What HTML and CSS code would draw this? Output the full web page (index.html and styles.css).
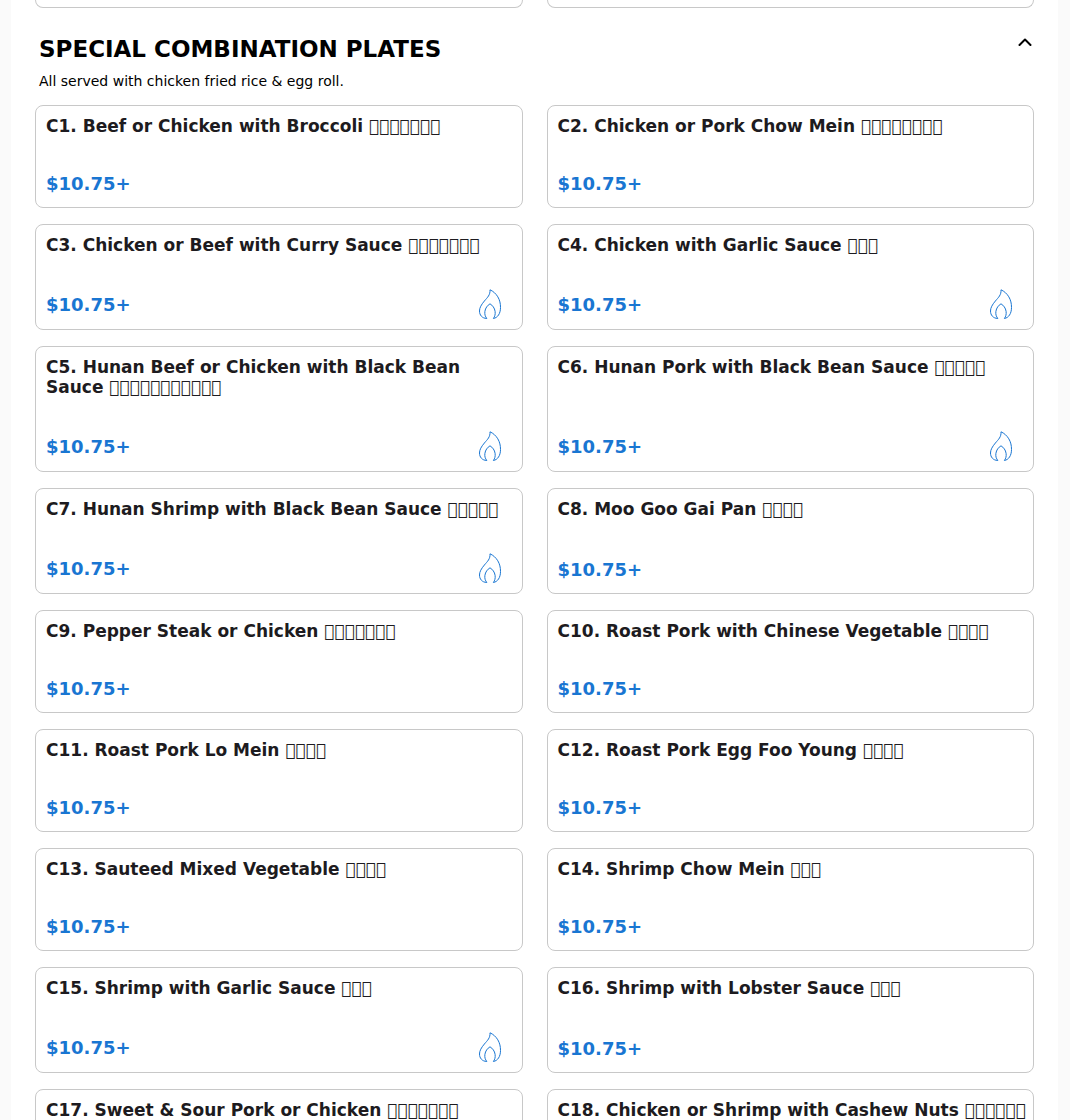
FILE: index.html
```
<!DOCTYPE html>
<html lang="en">
<head>
    <meta charset="UTF-8">
    <meta name="viewport" content="width=device-width, initial-scale=1.0">
    <title>Menu - Special Combination Plates</title>
    <link rel="stylesheet" href="styles.css">
</head>
<body>
    <!-- Shared flame icon for spicy dishes -->
    <svg class="sprite" aria-hidden="true">
        <symbol id="flame" viewBox="0 0 24 30">
            <path d="M12 0.8C12.4 6 9.4 8.4 6.4 12C3.2 15.8 1.5 18.8 1.5 22C1.5 26 4 29.3 8.8 29.5C7.2 27.4 6.5 25.4 6.9 22.4C7.4 19 9.4 16.4 12 14.8C14.6 16.4 16.6 19 17.1 22.4C17.5 25.4 16.8 27.4 15.4 29.5C19.6 28.8 22.5 24.6 22.5 18.6C22.5 14.4 21.8 11.2 19.8 7.8C18 4.8 15.2 2.2 12 0.8Z"/>
        </symbol>
    </svg>

    <main class="menu">
        <div class="menu-grid previous">
            <div class="card-end"></div>
            <div class="card-end"></div>
        </div>

        <section class="category">
            <header class="category-header">
                <div>
                    <h2>SPECIAL COMBINATION PLATES</h2>
                    <p>All served with chicken fried rice &amp; egg roll.</p>
                </div>
                <button class="btn-toggle" type="button" aria-label="Collapse category">
                    <svg viewBox="0 0 14 8"><path d="M1.5 7L7 1.5L12.5 7"/></svg>
                </button>
            </header>

            <div class="menu-grid">
                <article class="card">
                    <h3>C1. Beef or Chicken with Broccoli &#xE900;&#xE900;&#xE900;&#xE900;&#xE900;&#xE900;&#xE900;</h3>
                    <div class="card-footer"><span class="price">$10.75+</span></div>
                </article>
                <article class="card">
                    <h3>C2. Chicken or Pork Chow Mein &#xE900;&#xE900;&#xE900;&#xE900;&#xE900;&#xE900;&#xE900;&#xE900;</h3>
                    <div class="card-footer"><span class="price">$10.75+</span></div>
                </article>
                <article class="card">
                    <h3>C3. Chicken or Beef with Curry Sauce &#xE900;&#xE900;&#xE900;&#xE900;&#xE900;&#xE900;&#xE900;</h3>
                    <div class="card-footer"><span class="price">$10.75+</span><svg class="spicy"><use href="#flame"/></svg></div>
                </article>
                <article class="card">
                    <h3>C4. Chicken with Garlic Sauce &#xE900;&#xE900;&#xE900;</h3>
                    <div class="card-footer"><span class="price">$10.75+</span><svg class="spicy"><use href="#flame"/></svg></div>
                </article>
                <article class="card">
                    <h3>C5. Hunan Beef or Chicken with Black Bean Sauce &#xE900;&#xE900;&#xE900;&#xE900;&#xE900;&#xE900;&#xE900;&#xE900;&#xE900;&#xE900;&#xE900;</h3>
                    <div class="card-footer"><span class="price">$10.75+</span><svg class="spicy"><use href="#flame"/></svg></div>
                </article>
                <article class="card">
                    <h3>C6. Hunan Pork with Black Bean Sauce &#xE900;&#xE900;&#xE900;&#xE900;&#xE900;</h3>
                    <div class="card-footer"><span class="price">$10.75+</span><svg class="spicy"><use href="#flame"/></svg></div>
                </article>
                <article class="card">
                    <h3>C7. Hunan Shrimp with Black Bean Sauce &#xE900;&#xE900;&#xE900;&#xE900;&#xE900;</h3>
                    <div class="card-footer"><span class="price">$10.75+</span><svg class="spicy"><use href="#flame"/></svg></div>
                </article>
                <article class="card">
                    <h3>C8. Moo Goo Gai Pan &#xE900;&#xE900;&#xE900;&#xE900;</h3>
                    <div class="card-footer"><span class="price">$10.75+</span></div>
                </article>
                <article class="card">
                    <h3>C9. Pepper Steak or Chicken &#xE900;&#xE900;&#xE900;&#xE900;&#xE900;&#xE900;&#xE900;</h3>
                    <div class="card-footer"><span class="price">$10.75+</span></div>
                </article>
                <article class="card">
                    <h3>C10. Roast Pork with Chinese Vegetable &#xE900;&#xE900;&#xE900;&#xE900;</h3>
                    <div class="card-footer"><span class="price">$10.75+</span></div>
                </article>
                <article class="card">
                    <h3>C11. Roast Pork Lo Mein &#xE900;&#xE900;&#xE900;&#xE900;</h3>
                    <div class="card-footer"><span class="price">$10.75+</span></div>
                </article>
                <article class="card">
                    <h3>C12. Roast Pork Egg Foo Young &#xE900;&#xE900;&#xE900;&#xE900;</h3>
                    <div class="card-footer"><span class="price">$10.75+</span></div>
                </article>
                <article class="card">
                    <h3>C13. Sauteed Mixed Vegetable &#xE900;&#xE900;&#xE900;&#xE900;</h3>
                    <div class="card-footer"><span class="price">$10.75+</span></div>
                </article>
                <article class="card">
                    <h3>C14. Shrimp Chow Mein &#xE900;&#xE900;&#xE900;</h3>
                    <div class="card-footer"><span class="price">$10.75+</span></div>
                </article>
                <article class="card">
                    <h3>C15. Shrimp with Garlic Sauce &#xE900;&#xE900;&#xE900;</h3>
                    <div class="card-footer"><span class="price">$10.75+</span><svg class="spicy"><use href="#flame"/></svg></div>
                </article>
                <article class="card">
                    <h3>C16. Shrimp with Lobster Sauce &#xE900;&#xE900;&#xE900;</h3>
                    <div class="card-footer"><span class="price">$10.75+</span></div>
                </article>
                <article class="card">
                    <h3>C17. Sweet &amp; Sour Pork or Chicken &#xE900;&#xE900;&#xE900;&#xE900;&#xE900;&#xE900;&#xE900;</h3>
                </article>
                <article class="card">
                    <h3>C18. Chicken or Shrimp with Cashew Nuts &#xE900;&#xE900;&#xE900;&#xE900;&#xE900;&#xE900;</h3>
                </article>
            </div>
        </section>
    </main>
</body>
</html>
```
FILE: styles.css
```
* {
    box-sizing: border-box;
}

body {
    margin: 0;
    padding: 0 12px 0 11px;
    background-color: #fafafa;
    font-family: "DejaVu Sans", sans-serif;
    color: #000;
}

.sprite {
    display: none;
}

.menu {
    height: 100vh;
    padding: 0 24px;
    background-color: #fff;
    overflow: hidden;
}

.menu-grid {
    display: grid;
    grid-template-columns: 1fr 1fr;
    gap: 16px 24px;
}

/* Bottom edge of the category above */
.card-end {
    height: 8px;
    border: 1px solid #c8c8c8;
    border-top: none;
    border-radius: 0 0 8px 8px;
}

.category-header {
    display: flex;
    justify-content: space-between;
    align-items: flex-start;
    padding: 26px 2px 14px 4px;
}

.category-header h2 {
    margin: 0;
    font-size: 23px;
    line-height: 30px;
}

.category-header p {
    margin: 7px 0 0;
    font-size: 14px;
    line-height: 20px;
}

.btn-toggle {
    display: flex;
    margin: 4px 0 0;
    padding: 0;
    border: none;
    background: none;
    cursor: pointer;
}

.btn-toggle svg {
    width: 14px;
    height: 8px;
    fill: none;
    stroke: #000;
    stroke-width: 2;
    stroke-linecap: round;
    stroke-linejoin: round;
}

.card {
    display: flex;
    flex-direction: column;
    justify-content: space-between;
    gap: 34px;
    padding: 10px 4px 10px 10px;
    border: 1px solid #c8c8c8;
    border-radius: 8px;
}

.card h3 {
    margin: 0;
    font-size: 17px;
    line-height: 20px;
    color: #1d1b20;
}

.card-footer {
    display: flex;
    justify-content: space-between;
    align-items: center;
}

.price {
    font-size: 18px;
    font-weight: bold;
    line-height: 27px;
    color: #1976d2;
}

.spicy {
    width: 24px;
    height: 30px;
    margin-right: 16px;
    fill: none;
    stroke: #1976d2;
    stroke-width: 1;
    stroke-linejoin: round;
}
```
